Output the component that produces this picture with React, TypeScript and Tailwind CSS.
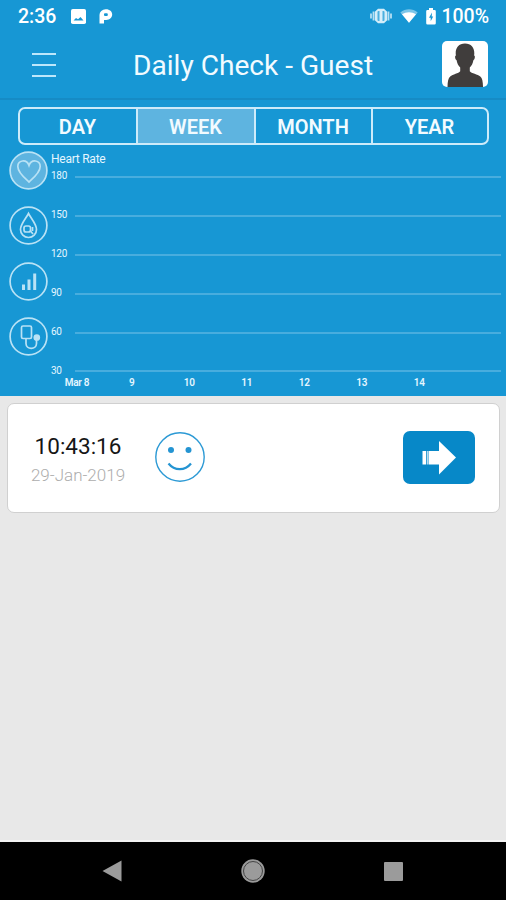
import type { ReactNode } from "react";

const tabs = ["DAY", "WEEK", "MONTH", "YEAR"];
const levels = [180, 150, 120, 90, 60, 30];
const days = ["9", "10", "11", "12", "13", "14"];

function StatusBar() {
  return (
    <div className="flex h-8 items-center pl-[18px] pr-[17px] text-white">
      <span className="w-[53px] pt-0.5 text-[19.5px] font-medium leading-none">2:36</span>
      <svg width="15" height="15" viewBox="0 0 15 15">
        <rect width="15" height="15" rx="1.8" fill="#fff" />
        <path d="M2.5 11.5 5 9l2 1.3 2.5-2.3 3 3.5Z" fill="#1797d4" />
      </svg>
      <svg className="ml-[13px]" width="14" height="15" viewBox="0 0 14 15">
        <path d="M.5 14.5V6.5A6.2 5.8 0 0 1 7 .3c3.8 0 6.200 2.300 6.200 5.300s-2.400 5.300-6 5.300H5v3.600Z" fill="#fff" />
        <rect x="5" y="4.2" width="3.8" height="2.8" rx="1" fill="#1797d4" />
      </svg>
      <svg className="ml-auto" width="22" height="16" viewBox="0 0 22 16">
        <path d="M1 5.5v5M3.500 3.500v9M18.500 3.500v9M21 5.500v5" stroke="#b5dff3" strokeWidth="1.8" />
        <path d="M8 .8h6l3.200 3v8.400l-3.200 3H8l-3.200-3V3.800Z" fill="#d3edf9" />
        <rect x="7.5" y="3" width="7" height="10" rx="1" fill="#4bb0df" />
        <path d="M11 2.500v11" stroke="#d8effb" strokeWidth="3" />
      </svg>
      <svg className="ml-2" width="18" height="14" viewBox="0 0 18 14">
        <path d="M.3 3.4C5.5-.8 12.5-.8 17.700 3.400L9 13.700Z" fill="#7cc5e8" />
        <path d="M2 5.300C6 2.600 12 2.600 16 5.300L9 13.700Z" fill="#fff" />
      </svg>
      <svg className="ml-[8px]" width="10" height="17" viewBox="0 0 10 17">
        <path d="M3 0h4v2h1.500q1.300 0 1.300 1.300v12q0 1.300-1.300 1.300h-7Q.2 16.600.2 15.300v-12Q.2 2 1.500 2H3Z" fill="#fff" />
        <path d="M6 4.500 3 9.700h1.700v3.500L7.200 8.500H5.700Z" fill="#1797d4" />
      </svg>
      <span className="ml-[5px] pt-0.5 text-[19.5px] font-medium leading-none">100%</span>
    </div>
  );
}

function Header() {
  return (
    <header className="flex h-[68px] items-center border-b-2 border-[#168bc5] pl-8 pr-[18px]">
      <button className="flex w-6 flex-col gap-[9px]">
        <span className="h-0.5 bg-[#bce7fb]" />
        <span className="h-0.5 bg-[#bce7fb]" />
        <span className="h-0.5 bg-[#bce7fb]" />
      </button>
      <h1 className="ml-[77px] whitespace-nowrap pt-[3px] text-[28.1px] leading-none text-[#f2fbff]">
        Daily Check - Guest
      </h1>
      <div className="-mt-0.5 ml-auto h-[46px] w-[46px] overflow-hidden rounded-[5px] bg-white">
        <svg width="46" height="46" viewBox="0 0 46 46">
          <path
            d="M23 2.500c6 0 9.500 4 9.300 10l-.2 2c1.400 0 .8 4-.7 4.700-.6 3.300-1.700 5.300-3.600 7.300v3.800c1.500 2.200 8 3 10.500 5.200 2 1.700 2.600 5 2.700 10.500H5.500c.1-5.500.8-8.800 2.700-10.500 2.500-2.200 8.500-3 10-5.200v-3.800c-1.900-2-3-4-3.600-7.300-1.500-.7-2.100-4.700-.7-4.700l-.2-2C13.500 6.500 17 2.500 23 2.500Z"
            fill="#403d3c"
          />
        </svg>
      </div>
    </header>
  );
}

function Tabs() {
  return (
    <div className="mx-auto mt-[7px] grid h-[38px] w-[471px] grid-cols-[118px_118px_117px_1fr] overflow-hidden rounded-[7px] border-2 border-[#cdebfa]">
      {tabs.map((tab) => (
        <button
          key={tab}
          className={`border-[#cdebfa] pt-0.5 text-[20px] font-semibold leading-none text-[#f2fbff] not-last:border-r-2 ${
            tab === "WEEK" ? "bg-[#5eb4e0]" : ""
          }`}
        >
          {tab}
        </button>
      ))}
    </div>
  );
}

function RoundIcon({ active, children }: { active?: boolean; children: ReactNode }) {
  return (
    <button className="h-[39px] w-[39px]">
      <svg width="39" height="39" viewBox="0 0 39 39" fill="none" stroke="#b9e2f5" strokeWidth="1.7">
        <circle cx="19.5" cy="19.5" r="18.4" fill={active ? "#5eb4e0" : "none"} />
        {children}
      </svg>
    </button>
  );
}

function Chart() {
  return (
    <section className="mt-[6px] flex h-[245px] pl-[9px]">
      <div className="flex w-[42px] flex-col gap-[16.4px]">
        <RoundIcon active>
          <path d="M20 31C15.500 27 8.800 21.500 8.800 15.500c0-6.500 8.700-7.800 11.200-1 2.500-6.800 11.200-5.500 11.200 1 0 6-6.700 11.500-11.200 15.500Z" />
        </RoundIcon>
        <RoundIcon>
          <path d="M19.500 7.500c2.500 5 8 10.500 8 16 0 4.500-3.500 8-8 8s-8-3.500-8-8c0-5.500 5.500-11 8-16Z" />
          <rect x="15" y="20" width="6.5" height="6" rx="2" />
          <path d="m21.500 25 2.500 3M23.500 21v4" />
        </RoundIcon>
        <RoundIcon>
          <path d="M14.500 22.500V28M20 17.500V28M25.700 11.500V28" strokeWidth="3" />
        </RoundIcon>
        <RoundIcon>
          <rect x="12.5" y="9" width="10" height="12.5" rx="1.5" />
          <path d="M17 22v4.500c0 6.500 10.500 6.500 10.500 0V22" />
          <circle cx="27.8" cy="20.5" r="2.5" fill="#b9e2f5" />
        </RoundIcon>
      </div>
      <div className="flex-1 text-[#e4f6ff]">
        <p className="h-[5px] text-[12px] leading-[17px] tracking-[-0.25px]">Heart Rate</p>
        {levels.map((level) => (
          <div key={level} className="flex h-[38.9px] items-center pr-[5px]">
            <span className="w-6 pt-0.5 text-[10px] leading-none tracking-[-0.3px]">{level}</span>
            <span className="mt-[3px] h-0.5 flex-1 bg-[#48adde]" />
          </div>
        ))}
        <div className="-mt-[12px] flex text-center text-[10px] font-semibold leading-[12px] tracking-[-0.3px]">
          <span className="w-[52px]">Mar 8</span>
          {days.map((day) => (
            <span key={day} className="w-[57.5px]">
              {day}
            </span>
          ))}
        </div>
      </div>
    </section>
  );
}

function RecordCard() {
  return (
    <div className="mx-[7px] mt-[7px] flex h-[110px] w-[493px] items-center rounded-[7px] border border-[#d0d0d0] bg-white pb-0.5 pl-[22px] pr-6">
      <div className="w-[96px] pt-[5px] text-center">
        <p className="text-[22.5px] leading-[26px] text-[#161616]">10:43:16</p>
        <p className="mt-[5px] whitespace-nowrap text-[17px] font-light leading-[22px] text-[#adadad]">29-Jan-2019</p>
      </div>
      <svg className="ml-[29px]" width="50" height="50" viewBox="0 0 50 50">
        <circle cx="25" cy="25" r="24.2" fill="none" stroke="#2d9ad5" strokeWidth="1.4" />
        <circle cx="16" cy="18" r="3" fill="#2494d2" />
        <circle cx="33.5" cy="18" r="3" fill="#2494d2" />
        <path d="M13.500 31.500c6 7.500 16.500 7.500 22.500 0" fill="none" stroke="#2494d2" strokeWidth="2.2" />
      </svg>
      <button className="ml-auto h-[53px] w-[72px] rounded-[7px] bg-[#0788c8]">
        <svg width="72" height="53" viewBox="0 0 72 53" fill="#fff">
          <path d="M25.500 20H36V10l17 16.500L36 43.500V33.500H25.500Z" />
          <path d="M19.500 20h3.500v13.500h-3.500ZM23.800 20h.9v13.500h-.9Z" />
        </svg>
      </button>
    </div>
  );
}

function NavigationBar() {
  return (
    <nav className="mt-auto flex h-[60px] items-center justify-between border-t-2 border-[#f3f3f3] bg-black pl-[102px] pr-[103px]">
      <svg width="20" height="22" viewBox="0 0 20 22">
        <path d="M.5 11 19.500.5v21Z" fill="#9b9b9b" />
      </svg>
      <svg width="24" height="24" viewBox="0 0 24 24" fill="#9b9b9b">
        <circle cx="12" cy="12" r="11.7" />
        <circle cx="12" cy="12" r="9.5" stroke="#444" strokeWidth="1" />
      </svg>
      <span className="h-[19px] w-[19px] rounded-[1px] bg-[#9b9b9b]" />
    </nav>
  );
}

export default function App() {
  return (
    <main className="flex h-[900px] w-[506px] flex-col overflow-hidden bg-[#e8e8e8] font-['Roboto',sans-serif]">
      <div className="bg-[#1797d4]">
        <StatusBar />
        <Header />
        <Tabs />
        <Chart />
      </div>
      <RecordCard />
      <NavigationBar />
    </main>
  );
}
